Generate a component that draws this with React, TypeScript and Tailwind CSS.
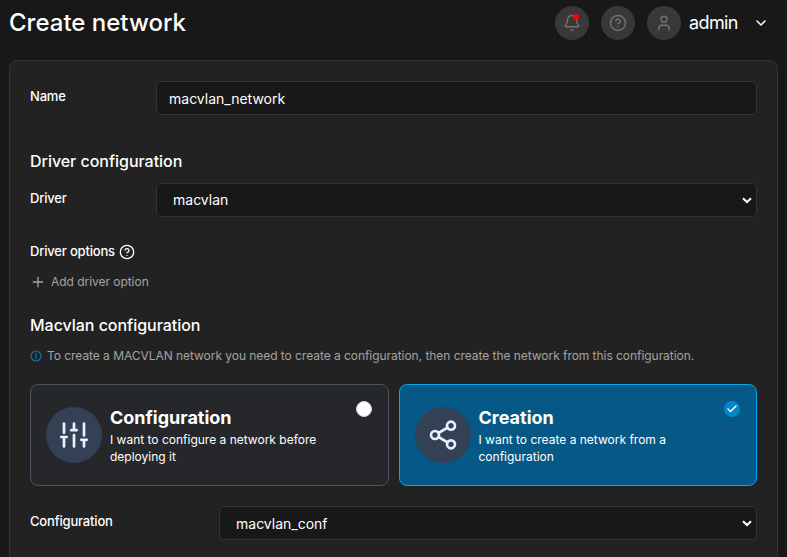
import { Bell, Check, ChevronDown, CircleHelp, Plus, Share2, User } from "lucide-react";
import type { ReactNode } from "react";

function RoundButton({ children }: { children: ReactNode }) {
  return (
    <div className="relative flex size-[34px] items-center justify-center rounded-full bg-[#383838] text-[#78716c]">
      {children}
    </div>
  );
}

function SelectArrow() {
  return (
    <svg className="ml-auto h-[7px] w-[10px]" viewBox="0 0 10 7" fill="none" stroke="#fff" strokeWidth="2.1">
      <path d="M1 1.2 5 5.1 9 1.2" />
    </svg>
  );
}

function SlidersIcon() {
  return (
    <svg
      className="size-8"
      viewBox="0 0 32 32"
      fill="none"
      stroke="#e0f2fe"
      strokeWidth="2.7"
      strokeLinecap="round"
      strokeLinejoin="round"
    >
      <path d="M6 4.5v9.2M6 18v9.5M3.3 18h5.4M16 4.5v6.7M16 16v11.5M13.3 11.2h5.4M26 4.5v12M26 20.8v6.7M23.3 20.8h5.4" />
    </svg>
  );
}

function InfoIcon() {
  return (
    <svg className="size-3" viewBox="0 0 12 12" fill="none" stroke="#0b76b0">
      <circle cx="6" cy="6" r="5" strokeWidth="1.2" />
      <path d="M6 3v6" strokeWidth="1.2" />
    </svg>
  );
}

function Option({
  selected,
  icon,
  title,
  lines,
}: {
  selected?: boolean;
  icon: ReactNode;
  title: string;
  lines: [string, string];
}) {
  return (
    <div
      className={
        selected
          ? "flex h-[102px] w-[358px] rounded-lg border border-[#0ba5ec] bg-[#065986] px-[15px]"
          : "flex h-[102px] w-[359px] rounded-lg border border-[#4b5563] bg-[#26272b] px-[15px]"
      }
    >
      <div className="mt-[22px] flex size-14 shrink-0 items-center justify-center rounded-full bg-[#344054]">{icon}</div>
      <div
        className={
          selected ? "ml-[7.5px] pt-[19px] whitespace-nowrap" : "ml-2 pt-[19px] whitespace-nowrap"
        }
      >
        <div className="h-[27px] text-lg leading-7 font-bold">{title}</div>
        <div className="text-xs leading-[17px]">
          {lines[0]}
          <br />
          {lines[1]}
        </div>
      </div>
      <div
        className={
          selected
            ? "mt-4 mr-px ml-auto flex size-4 items-center justify-center rounded-full bg-[#0086c9]"
            : "mt-4 mr-px ml-auto size-4 rounded-full border border-[#d0d5dd] bg-white"
        }
      >
        {selected && <Check className="size-3" strokeWidth={3} />}
      </div>
    </div>
  );
}

export default function App() {
  return (
    <div className="h-[557px] w-[787px] overflow-hidden bg-[#181818] font-['Inter',sans-serif] text-white">
      <header className="flex h-[60px] items-start pt-[6px] pl-[9px]">
        <h1 className="text-2xl leading-[34px] font-medium">Create network</h1>
        <div className="mr-[18px] ml-auto flex items-center">
          <div className="flex gap-3">
            <RoundButton>
              <Bell className="size-[18px]" strokeWidth={1.9} />
              <span className="absolute top-2 left-[18px] size-[6px] rounded-full bg-[#ff0000]" />
            </RoundButton>
            <RoundButton>
              <CircleHelp className="size-[18px]" strokeWidth={1.9} />
            </RoundButton>
            <RoundButton>
              <User className="size-[18px]" strokeWidth={1.9} />
            </RoundButton>
          </div>
          <span className="ml-2 w-[64px] text-lg leading-[34px] tracking-[-0.6px]">admin</span>
          <ChevronDown className="size-4" strokeWidth={2.25} />
        </div>
      </header>

      <main className="ml-[9px] h-[510px] w-[769px] rounded-lg border border-[#343434] bg-[#222222] px-5 pt-5">
        <div className="flex">
          <div className="w-[126px] text-[13px] leading-[31px] font-medium tracking-[-0.2px]">Name</div>
          <div className="h-[34px] w-[601px] rounded-[5px] border border-[#343434] bg-[#181818] px-3 text-sm leading-[34px]">
            macvlan_network
          </div>
        </div>

        <h2 className="mt-[34px] h-[34px] text-base leading-6 font-medium tracking-[-0.03px]">Driver configuration</h2>
        <div className="flex">
          <div className="w-[126px] text-[13px] leading-[31px] font-medium tracking-[-0.2px]">Driver</div>
          <div className="flex h-[34px] w-[601px] items-center rounded-[5px] border border-[#343434] bg-[#181818] pr-1 pl-4 text-sm">
            macvlan
            <SelectArrow />
          </div>
        </div>

        <div className="mt-[25px] flex h-5 items-center gap-1 text-[13px] font-medium tracking-[-0.18px]">
          Driver options
          <CircleHelp className="size-4" strokeWidth={2} />
        </div>
        <div className="mt-[10px] flex h-5 items-center gap-[5px] text-xs tracking-[-0.04px] text-[#a3a3a3]">
          <Plus className="mb-px size-4" strokeWidth={2} />
          Add driver option
        </div>

        <h2 className="mt-[21px] h-6 text-base leading-6 font-medium tracking-[-0.03px]">Macvlan configuration</h2>
        <div className="mt-[9px] flex h-5 items-center gap-[5px] text-xs tracking-[-0.047px] whitespace-nowrap text-[#a3a3a3]">
          <InfoIcon />
          To create a MACVLAN network you need to create a configuration, then create the network from this configuration.
        </div>

        <div className="mt-[18px] flex gap-[10px]">
          <Option
            icon={<SlidersIcon />}
            title="Configuration"
            lines={["I want to configure a network before", "deploying it"]}
          />
          <Option
            selected
            icon={<Share2 className="size-8 text-[#e0f2fe]" strokeWidth={2} />}
            title="Creation"
            lines={["I want to create a network from a", "configuration"]}
          />
        </div>

        <div className="mt-5 flex">
          <div className="w-[189px] text-[13px] leading-[31px] font-medium tracking-[-0.18px]">Configuration</div>
          <div className="flex h-[34px] w-[538px] items-center rounded-[5px] border border-[#343434] bg-[#181818] pt-px pr-1 pl-4 text-sm">
            macvlan_conf
            <SelectArrow />
          </div>
        </div>
      </main>
    </div>
  );
}
